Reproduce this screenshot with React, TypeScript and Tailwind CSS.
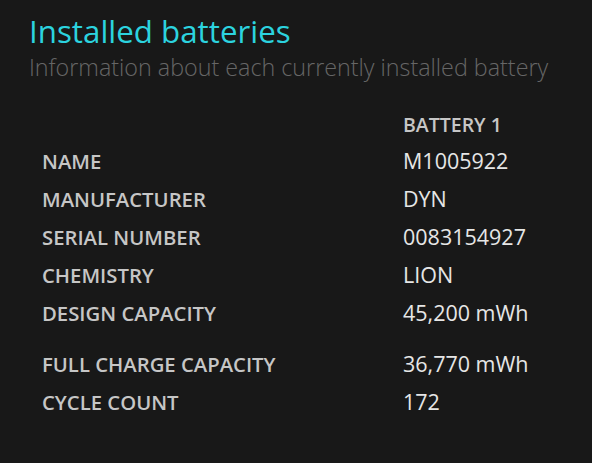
import React from "react";

const rows: [string, string][] = [
  ["NAME", "M1005922"],
  ["MANUFACTURER", "DYN"],
  ["SERIAL NUMBER", "0083154927"],
  ["CHEMISTRY", "LION"],
  ["DESIGN CAPACITY", "45,200 mWh"],
];

const rows2: [string, string][] = [
  ["FULL CHARGE CAPACITY", "36,770 mWh"],
  ["CYCLE COUNT", "172"],
];

const Row = ({ label, value }: { label: string; value: string }) => (
  <div className="flex items-center h-[38px]">
    <div className="w-[361px] text-[20.3px] font-semibold text-[#c6c6c6]">{label}</div>
    <div className="text-[21.5px] text-[#e6e6e6]">{value}</div>
  </div>
);

export default function App() {
  return (
    <div
      className="w-[592px] h-[463px] bg-[#181818] overflow-hidden"
      style={{ fontFamily: '"Open Sans", "Noto Sans", sans-serif' }}
    >
      <div className="pl-[29px] pt-[10px]">
        <h1 className="text-[31.3px] leading-[42px] text-[#2cd3df]">Installed batteries</h1>
        <p className="text-[23.3px] leading-[30px] font-light text-[#666666]">
          Information about each currently installed battery
        </p>
      </div>
      <div className="pl-[42px] mt-[25px]">
        <div className="flex items-center h-[35px]">
          <div className="w-[361px]" />
          <div className="text-[19.5px] font-semibold text-[#c6c6c6]">BATTERY 1</div>
        </div>
        {rows.map(([l, v]) => (
          <Row key={l} label={l} value={v} />
        ))}
        <div className="h-[13px]" />
        {rows2.map(([l, v]) => (
          <Row key={l} label={l} value={v} />
        ))}
      </div>
    </div>
  );
}
